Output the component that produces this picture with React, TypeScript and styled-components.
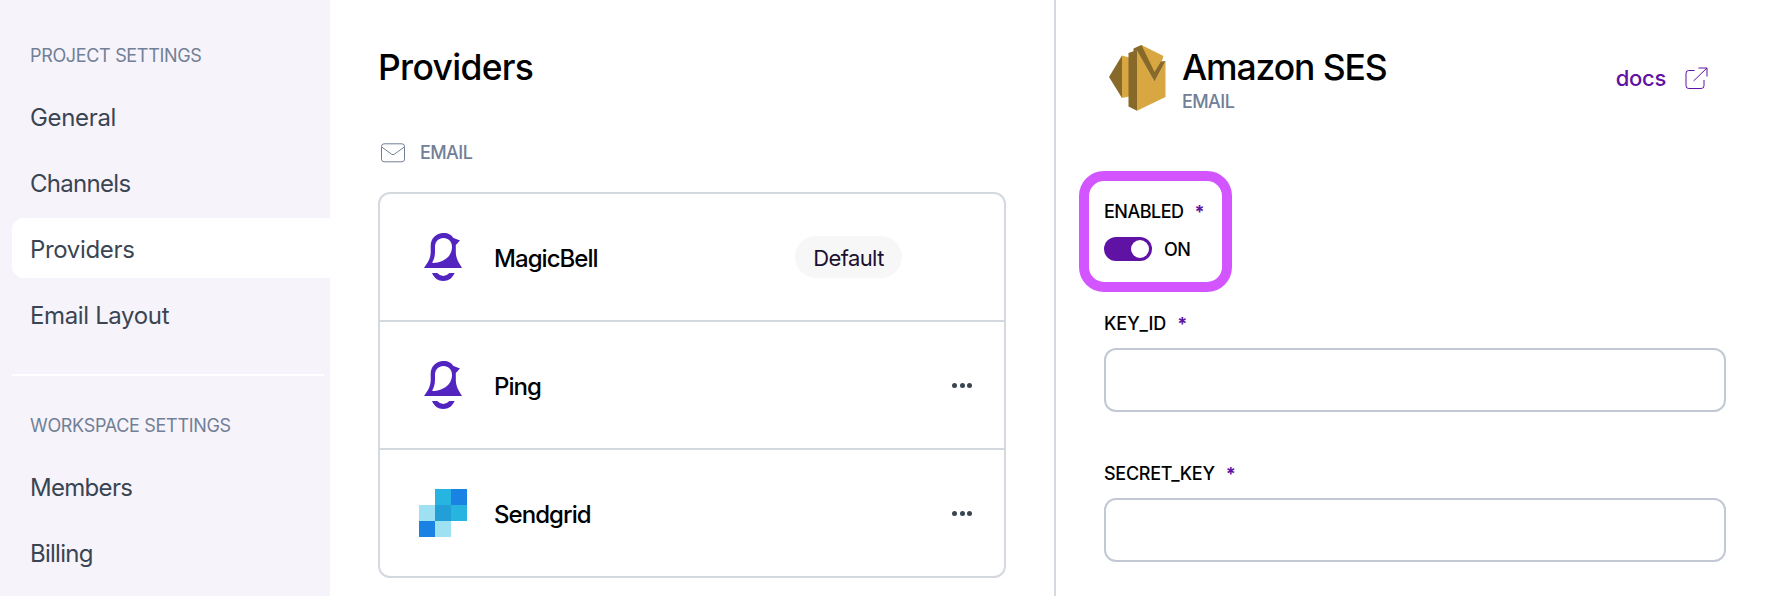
import React from 'react';
import styled, { createGlobalStyle } from 'styled-components';

const GlobalStyle = createGlobalStyle`
  *, *::before { box-sizing: border-box; }
  body {
    margin: 0;
    background: #fff;
    color: #000;
    font-family: Inter, "Open Sans", sans-serif;
  }
`;

const Page = styled.div`
  display: flex;
  width: 1768px;
  height: 596px;
  overflow: hidden;
`;

const Sidebar = styled.nav`
  width: 330px;
  flex: none;
  padding: 44px 0 0 12px;
  background: #f7f3fa;
`;

const NavHeading = styled.h2<{ $tracking: number }>`
  margin: 0 0 18px;
  padding-left: 18px;
  font-size: 18px;
  font-weight: 430;
  line-height: 24px;
  letter-spacing: ${(p) => p.$tracking}px;
  color: #718096;
`;

const NavItem = styled.a<{ $active?: boolean; $tracking: number }>`
  display: flex;
  align-items: center;
  height: 60px;
  margin-bottom: 6px;
  padding: 2px 0 0 18px;
  border-radius: 12px 0 0 12px;
  background: ${(p) => (p.$active ? '#fff' : 'transparent')};
  font-size: 24px;
  font-weight: 430;
  letter-spacing: ${(p) => p.$tracking}px;
  color: #3a4553;
`;

const NavDivider = styled.hr`
  height: 2px;
  margin: 30px 6px 38px 0;
  border: 0;
  background: #fff;
`;

const Main = styled.main`
  width: 724px;
  flex: none;
  padding: 45px 48px 0;
`;

const Title = styled.h1<{ $tracking: number }>`
  height: 44px;
  margin: 0;
  font-size: 35.5px;
  font-weight: 470;
  line-height: 46px;
  letter-spacing: ${(p) => p.$tracking}px;
`;

const ChannelHeading = styled.div`
  display: flex;
  align-items: center;
  gap: 15px;
  height: 24px;
  margin: 52px 0 27px;
  padding-left: 3px;
  color: #718096;
`;

const Caption = styled.span`
  font-size: 18px;
  font-weight: 450;
  line-height: 24px;
  letter-spacing: -0.58px;
  color: #718096;
`;

const ProviderList = styled.ul`
  margin: 0;
  padding: 0;
  list-style: none;
  border: 2px solid #d4d8df;
  border-radius: 12px;
`;

const ProviderRow = styled.li`
  display: flex;
  align-items: center;
  height: 126px;
  padding: 0 34px 0 39px;

  & + & {
    height: 128px;
    border-top: 2px solid #d4d8df;
  }
`;

const ProviderName = styled.span<{ $tracking: number }>`
  flex: 1;
  padding: 3px 0 0 27px;
  font-size: 24px;
  font-weight: 480;
  letter-spacing: ${(p) => p.$tracking}px;
`;

const Badge = styled.span`
  display: flex;
  align-items: center;
  justify-content: center;
  width: 107px;
  height: 42px;
  margin-right: 68px;
  padding-top: 2px;
  border-radius: 21px;
  background: #f7f7f7;
  font-size: 22px;
  letter-spacing: -0.6px;
  color: #1c1030;
`;

const MenuButton = styled.button`
  display: flex;
  gap: 2.3px;
  margin: 0 -2px 0 0;
  padding: 0;
  border: 0;
  background: none;
`;

const MenuDot = styled.i`
  width: 5px;
  height: 5px;
  border-radius: 50%;
  background: #3a4553;
`;

const Detail = styled.section`
  flex: 1;
  padding: 43px 42px 0 48px;
  border-left: 2px solid #d4d8df;
`;

const DetailHeader = styled.header`
  display: flex;
  align-items: flex-start;
  height: 156px;
`;

const DetailTitle = styled.div`
  flex: 1;
  display: flex;
  flex-direction: column;
  padding: 2px 0 0 8px;
`;

const DetailCaption = styled(Caption)`
  margin-top: 1px;
`;

const DocsLink = styled.a`
  display: flex;
  align-items: center;
  gap: 19px;
  margin: 21px 18px 0 0;
  font-size: 22px;
  font-weight: 500;
  line-height: 28px;
  letter-spacing: -0.3px;
  color: #5f12a3;
`;

const Field = styled.div<{ $highlighted?: boolean }>`
  position: relative;
  height: ${(p) => (p.$highlighted ? 112 : 150)}px;

  &::before {
    content: '';
    display: ${(p) => (p.$highlighted ? 'block' : 'none')};
    position: absolute;
    left: -25px;
    top: -28px;
    width: 153px;
    height: 121px;
    border: 10px solid #d255ff;
    border-radius: 25px;
  }
`;

const Label = styled.label<{ $tracking: number }>`
  display: flex;
  gap: 11px;
  height: 24px;
  font-size: 18px;
  font-weight: 480;
  line-height: 26px;
  letter-spacing: ${(p) => p.$tracking}px;
`;

const Required = styled.span`
  font-weight: 700;
  color: #5f12a3;
`;

const Input = styled.input`
  display: block;
  width: 622px;
  height: 64px;
  margin: 13px 0 0;
  border: 2px solid #c3c8d5;
  border-radius: 12px;
  background: #fff;
`;

const SwitchRow = styled.div`
  display: flex;
  align-items: center;
  gap: 12px;
  margin-top: 14px;
  height: 24px;
  font-size: 18px;
  font-weight: 480;
  letter-spacing: -0.5px;
`;

const Switch = styled.span`
  display: flex;
  align-items: center;
  justify-content: flex-end;
  width: 48px;
  height: 24px;
  padding-right: 3px;
  border-radius: 12px;
  background: #5f12a3;
`;

const Knob = styled.span`
  width: 18px;
  height: 18px;
  border-radius: 50%;
  background: #fff;
`;

const MailIcon = () => (
  <svg width="24" height="20" viewBox="0 0 24 20" fill="none" stroke="currentColor">
    <rect x="0.5" y="0.8" width="23" height="18" rx="2.6" />
    <path d="M.7 4 10.6 11.2Q12 12.2 13.4 11.2L23.3 4" />
  </svg>
);

const BellLogo = () => (
  <svg width="48" height="48" viewBox="0 0 48 48" fill="#5225c1">
    <path
      fillRule="evenodd"
      d="M5 35C9 29 11.5 26 11.7 19V13C11.7 5.500 17 0 24.500 0C29.500 0 32.500 2 34.500 5L41 7.500L36.800 12V19C37 26 39.500 29 43 35ZM14 30C22 30 33 25 33 14C33 8.500 29.500 5 24.500 5C19.500 5 16 8.500 16 14V19C16 24 14.500 27 13.300 29.500Q13.200 30 14 30Z"
    />
    <path d="M13 40H18.200Q24.300 46.200 30.400 40H35.600C33.500 45 29.500 48 24.300 48C19 48 15 45 13 40Z" />
  </svg>
);

const SendgridLogo = () => (
  <svg width="48" height="48" viewBox="0 0 48 48" shapeRendering="crispEdges">
    <path fill="#9ee1f2" d="M0 16h16v16H0zM16 32h16v16H16z" />
    <path fill="#27b4e1" d="M16 0h16v16H16zM32 16h16v16H32z" />
    <path fill="#1a82e2" d="M32 0h16v16H32zM0 32h16v16H0z" />
    <path fill="#239fd8" d="M16 16h16v16H16z" />
  </svg>
);

const SesLogo = () => (
  <svg width="70" height="70" viewBox="0 0 70 70">
    <path fill="#876929" d="M5 34 18 12.500V55Z" />
    <path fill="#d9a741" d="M18 12.500 25 14.500V53.500L18 55Z" />
    <path fill="#d9a741" d="M37.500 2 59.500 13 57 21 50 34 33 5Z" />
    <path fill="#d9a741" d="M33 7 50.500 38.500 61.500 18V54L33 67.700Z" />
    <path fill="#876929" d="M24.500 10 33 7V67.700L24.500 63.500Z" />
    <path fill="#876929" d="M29.500 5.500 37.500 2 50.500 29 57 18.500 61.500 18 50.500 38.500 33 7.500 29.500 8.500Z" />
  </svg>
);

const ExternalIcon = () => (
  <svg width="23" height="23" viewBox="0 0 23 23" fill="none" stroke="currentColor" strokeWidth="1">
    <path d="M9.500 3.500H3.800Q1 3.500 1 6.300V18.700Q1 21.500 3.800 21.500H16.200Q19 21.500 19 18.700V13" />
    <path d="M8.500 14 22 1M13.500 1H22V9.500" />
  </svg>
);

const MoreMenu = () => (
  <MenuButton aria-label="More">
    <MenuDot />
    <MenuDot />
    <MenuDot />
  </MenuButton>
);

export default function App() {
  return (
    <>
      <GlobalStyle />
      <Page>
        <Sidebar>
          <NavHeading $tracking={-0.33}>PROJECT SETTINGS</NavHeading>
          <NavItem $tracking={-0.34}>General</NavItem>
          <NavItem $tracking={-0.7}>Channels</NavItem>
          <NavItem $active $tracking={-0.34}>Providers</NavItem>
          <NavItem $tracking={-0.36}>Email Layout</NavItem>
          <NavDivider />
          <NavHeading $tracking={-0.32}>WORKSPACE SETTINGS</NavHeading>
          <NavItem $tracking={-0.7}>Members</NavItem>
          <NavItem $tracking={-0.75}>Billing</NavItem>
        </Sidebar>

        <Main>
          <Title $tracking={-0.7}>Providers</Title>
          <ChannelHeading>
            <MailIcon />
            <Caption>EMAIL</Caption>
          </ChannelHeading>
          <ProviderList>
            <ProviderRow>
              <BellLogo />
              <ProviderName $tracking={-0.95}>MagicBell</ProviderName>
              <Badge>Default</Badge>
            </ProviderRow>
            <ProviderRow>
              <BellLogo />
              <ProviderName $tracking={-0.95}>Ping</ProviderName>
              <MoreMenu />
            </ProviderRow>
            <ProviderRow>
              <SendgridLogo />
              <ProviderName $tracking={-0.95}>Sendgrid</ProviderName>
              <MoreMenu />
            </ProviderRow>
          </ProviderList>
        </Main>

        <Detail>
          <DetailHeader>
            <SesLogo />
            <DetailTitle>
              <Title $tracking={-1.1}>Amazon SES</Title>
              <DetailCaption>EMAIL</DetailCaption>
            </DetailTitle>
            <DocsLink>
              docs
              <ExternalIcon />
            </DocsLink>
          </DetailHeader>
          <Field $highlighted>
            <Label $tracking={-0.5}>
              ENABLED<Required>*</Required>
            </Label>
            <SwitchRow>
              <Switch>
                <Knob />
              </Switch>
              ON
            </SwitchRow>
          </Field>
          <Field>
            <Label $tracking={-0.05}>
              KEY_ID<Required>*</Required>
            </Label>
            <Input />
          </Field>
          <Field>
            <Label $tracking={-0.3}>
              SECRET_KEY<Required>*</Required>
            </Label>
            <Input />
          </Field>
        </Detail>
      </Page>
    </>
  );
}
